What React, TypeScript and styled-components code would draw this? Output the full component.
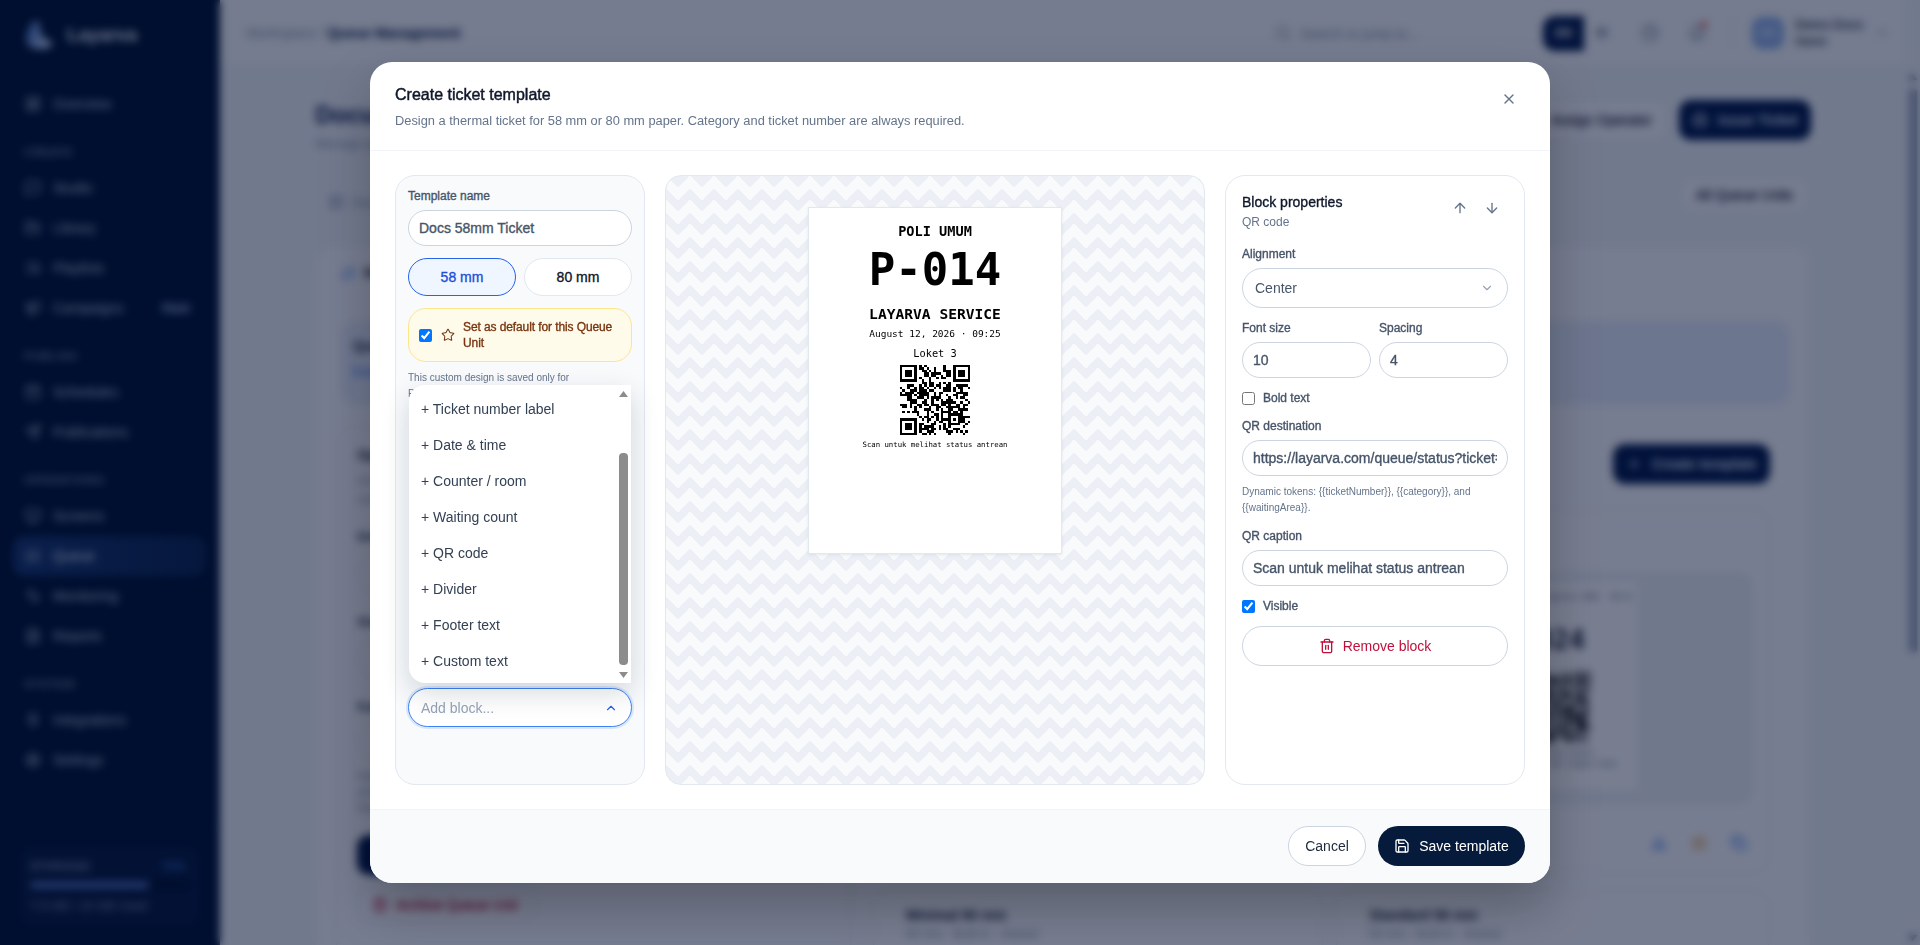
import styled, { createGlobalStyle, css } from "styled-components";
import {
  Activity,
  ArrowDown,
  ArrowUp,
  Bell,
  Calendar,
  ChevronDown,
  ChevronUp,
  Clock,
  Copy,
  Download,
  FileText,
  FolderOpen,
  LayoutDashboard,
  ListOrdered,
  ListVideo,
  Megaphone,
  MessageSquare,
  Monitor,
  Plug,
  Plus,
  Printer,
  Repeat,
  Save,
  Search,
  Send,
  Settings,
  Star,
  Trash2,
  X,
} from "lucide-react";

const GlobalStyle = createGlobalStyle`
  html, body {
    margin: 0;
    height: 945px;
    overflow: hidden;
    font-family: "Liberation Sans", Arial, sans-serif;
    background: #f1f5f9;
  }
  * { box-sizing: border-box; }
`;

// the reference text has regular widths with a heavier stroke
const medium = css`
  -webkit-text-stroke: 0.35px currentColor;
`;

/* ---------- QR drawing ---------- */

const buildQr = (seed: number) => {
  const n = 29;
  const grid: boolean[][] = [];
  let s = seed;
  for (let y = 0; y < n; y++) {
    grid[y] = [];
    for (let x = 0; x < n; x++) {
      s = (s * 1103515245 + 12345) & 0x7fffffff;
      grid[y][x] = ((s >> 16) & 7) > 3;
    }
  }
  const clear = (x0: number, y0: number, w: number) => {
    for (let y = y0; y < y0 + w; y++)
      for (let x = x0; x < x0 + w; x++)
        if (grid[y] && x >= 0 && x < n) grid[y][x] = false;
  };
  const ring = (x0: number, y0: number, w: number) => {
    for (let y = y0; y < y0 + w; y++)
      for (let x = x0; x < x0 + w; x++)
        if (y === y0 || x === x0 || y === y0 + w - 1 || x === x0 + w - 1) grid[y][x] = true;
  };
  const finder = (x0: number, y0: number) => {
    ring(x0, y0, 7);
    for (let y = y0 + 2; y < y0 + 5; y++) for (let x = x0 + 2; x < x0 + 5; x++) grid[y][x] = true;
  };
  clear(0, 0, 8);
  clear(n - 8, 0, 8);
  clear(0, n - 8, 8);
  finder(0, 0);
  finder(n - 7, 0);
  finder(0, n - 7);
  clear(20, 20, 5);
  ring(20, 20, 5);
  grid[22][22] = true;
  let d = "";
  grid.forEach((row, y) =>
    row.forEach((on, x) => {
      if (on) d += `M${x} ${y}h1v1h-1z`;
    }),
  );
  return d;
};

const qrPath = buildQr(20260812);

const QrSvg = styled.svg<{ $size: number; $gap?: number }>`
  display: block;
  width: ${(p) => p.$size}px;
  height: ${(p) => p.$size}px;
  margin-top: ${(p) => p.$gap ?? 0}px;
  flex: none;
`;

const QrCode = ({ size, gap }: { size: number; gap?: number }) => (
  <QrSvg $size={size} $gap={gap} viewBox="0 0 29 29" shapeRendering="crispEdges">
    <path d={qrPath} fill="#000" />
  </QrSvg>
);

/* ---------- dashboard behind the dialog ---------- */

const Shell = styled.div`
  display: grid;
  grid-template-columns: 220px 1fr 15px;
  grid-template-rows: 945px;
  height: 945px;
  overflow: hidden;
  background: #f1f5f9;
`;

const Sidebar = styled.aside`
  display: flex;
  flex-direction: column;
  min-height: 0;
  background: #001332;
  color: #b9c7de;
  border-right: 1px solid #1c3560;
`;

const Brand = styled.div`
  display: flex;
  align-items: center;
  gap: 13px;
  height: 84px;
  padding: 0 0 14px 25px;
  font-size: 18.5px;
  font-weight: 700;
  color: #e6eefa;
`;

const Nav = styled.nav`
  display: flex;
  flex-direction: column;
`;

const SectionLabel = styled.div`
  height: 44px;
  padding: 20px 0 0 24px;
  font-size: 11.5px;
  line-height: 16px;
  letter-spacing: 0.6px;
  color: #a3b2cc;
`;

const NavItem = styled.div<{ $active?: boolean }>`
  display: flex;
  align-items: center;
  gap: 12px;
  height: 40px;
  margin: 0 13px;
  padding: 0 12px;
  border-radius: 12px;
  font-size: 14px;
  background: ${(p) => (p.$active ? "linear-gradient(90deg, #15366e, #0d2650)" : "transparent")};
  color: ${(p) => (p.$active ? "#e6eefa" : "#b9c7de")};
`;

const NavBadge = styled.span`
  margin-left: auto;
  padding: 2px 5px;
  border-radius: 6px;
  font-size: 11px;
  font-weight: 700;
  background: #0c2248;
`;

const SideFooter = styled.div`
  margin-top: auto;
  padding: 17px 18px;
  border-top: 1px solid #0c2146;
`;

const StorageCard = styled.div`
  height: 83px;
  padding: 15px 12px 0;
  border-radius: 14px;
  background: #05193d;
  font-size: 12.5px;
  line-height: 13px;
  color: #8697b6;
`;

const StorageHead = styled.div`
  display: flex;
  justify-content: space-between;
  font-size: 11.5px;
  font-weight: 700;
  letter-spacing: 0.6px;
`;

const StoragePct = styled.span`
  padding: 0 3px;
  color: #3a6fd4;
`;

const Track = styled.div`
  height: 6px;
  margin: 9px 0 12px;
  border-radius: 3px;
  background: #010c24;
  overflow: hidden;
`;

const Fill = styled.div`
  height: 100%;
  border-radius: 3px;
  background: #5878c8;
`;

const Main = styled.main`
  display: flex;
  flex-direction: column;
  min-width: 0;
  min-height: 0;
  overflow: hidden;
`;

const Topbar = styled.header`
  display: flex;
  align-items: center;
  flex: none;
  height: 67px;
  padding: 0 15px 0 26px;
  background: #f8fafc;
  border-bottom: 1px solid #e2e8f0;
`;

const Crumb = styled.div`
  font-size: 14px;
  color: #8b9ab0;
  b {
    color: #0a1f4a;
  }
`;

const SearchBox = styled.div`
  display: flex;
  align-items: center;
  gap: 9px;
  width: 260px;
  height: 36px;
  margin: 0 18px 0 auto;
  padding: 0 10px;
  font-size: 13.5px;
  color: #7d8ca3;
`;

const LangGroup = styled.div`
  display: flex;
  width: 77px;
  height: 35px;
  margin-right: 13px;
  border-radius: 12px;
  overflow: hidden;
  font-size: 12px;
  font-weight: 700;
`;

const LangOption = styled.span<{ $on?: boolean }>`
  display: flex;
  flex: ${(p) => (p.$on ? "0 0 41px" : 1)};
  align-items: center;
  justify-content: center;
  background: ${(p) => (p.$on ? "#02194a" : "transparent")};
  color: ${(p) => (p.$on ? "#fff" : "#64748b")};
`;

const IconSlot = styled.span`
  position: relative;
  display: flex;
  align-items: center;
  justify-content: center;
  width: 34px;
  height: 34px;
  margin-right: 13px;
  color: #64748b;
`;

const RedDot = styled.i`
  position: absolute;
  top: 6px;
  right: 7px;
  width: 6px;
  height: 6px;
  border-radius: 50%;
  background: #ef4444;
`;

const VRule = styled.span`
  width: 1px;
  height: 28px;
  margin: 0 19px 0 5px;
  background: #e2e8f0;
`;

const Avatar = styled.span`
  display: flex;
  align-items: center;
  justify-content: center;
  width: 32px;
  height: 32px;
  margin-right: 11px;
  border-radius: 10px;
  background: #8fb0e6;
  color: #dbeafe;
  font-size: 12px;
  font-weight: 700;
`;

const UserName = styled.div`
  flex: none;
  width: 79px;
  font-size: 13px;
  line-height: 17px;
  color: #2a3648;
  ${medium}
  small {
    display: block;
    font-size: 11px;
  }
`;

const Page = styled.div`
  padding: 33px 94px 0 95px;
`;

const PageHead = styled.div`
  display: flex;
  justify-content: space-between;
  height: 53px;
`;

const PageTitle = styled.h1`
  margin: 0;
  font-size: 24px;
  line-height: 30px;
  color: #0c2350;
`;

const PageSub = styled.p`
  margin: 6px 0 0;
  font-size: 13px;
  color: #8b9ab0;
`;

const HeadActions = styled.div`
  display: flex;
  gap: 12px;
`;

const GhostButton = styled.div<{ $h?: number }>`
  display: flex;
  align-items: center;
  gap: 8px;
  height: ${(p) => p.$h ?? 40}px;
  padding: 0 14px;
  border-radius: 12px;
  border: 1px solid #dfe5ec;
  background: #fbfcfe;
  font-size: 14px;
  color: #1e293b;
  ${medium}
`;

const NavyButton = styled.div<{ $w?: number }>`
  display: flex;
  align-items: center;
  justify-content: center;
  gap: 10px;
  width: ${(p) => p.$w ?? 132}px;
  height: 40px;
  border-radius: 12px;
  background: #02194a;
  font-size: 14px;
  font-weight: 600;
  color: #dbe6f6;
`;

const PageTools = styled.div`
  display: flex;
  justify-content: space-between;
  align-items: flex-end;
  margin: 25px 0 33px;
  padding-right: 3px;
`;

const TabLink = styled.span`
  display: flex;
  align-items: center;
  gap: 8px;
  padding: 0 0 2px 13px;
  font-size: 13px;
  color: #8b9ab0;
`;

const OuterCard = styled.section`
  padding: 12px 20px 0;
  border: 1px solid #e8edf3;
  border-radius: 20px;
  background: #fbfcfe;
`;

const CardTitle = styled.div`
  display: flex;
  align-items: center;
  gap: 8px;
  height: 30px;
  padding-left: 5px;
  font-size: 14px;
  font-weight: 700;
  color: #1e293b;
  svg {
    color: #3b82f6;
  }
`;

const InfoBand = styled.div`
  height: 84px;
  margin: 33px 0 21px 5px;
  padding: 17px 12px;
  border-radius: 16px;
  background: #e6eefb;
  font-size: 14px;
  font-weight: 700;
  color: #1e293b;
  small {
    display: block;
    margin-top: 10px;
    font-size: 13px;
    font-weight: 400;
    color: #2563eb;
  }
`;

const Columns = styled.div`
  display: grid;
  grid-template-columns: 515px 898px;
  column-gap: 22px;
`;

const FormCard = styled.div`
  height: 560px;
  padding: 20px;
  border: 1px solid #e8edf3;
  border-radius: 18px;
`;

const FormTitle = styled.div`
  font-size: 14px;
  font-weight: 700;
  color: #1e293b;
`;

const FormNote = styled.div<{ $gap?: number }>`
  margin-top: ${(p) => p.$gap ?? 4}px;
  font-size: 12px;
  line-height: 16px;
  color: #8b9ab0;
`;

const FormLabel = styled.div<{ $gap: number }>`
  margin-top: ${(p) => p.$gap}px;
  font-size: 12px;
  font-weight: 700;
  color: #334155;
`;

const FormField = styled.div`
  height: 40px;
  margin-top: 9px;
  border: 1px solid #e2e8f0;
  border-radius: 20px;
`;

const FormSave = styled(NavyButton)`
  width: 100%;
  margin-top: 19px;
`;

const ArchiveButton = styled(GhostButton)`
  width: 178px;
  height: 37px;
  margin-top: 11px;
  color: #be123c;
`;

const TemplatesHead = styled.div`
  display: flex;
  justify-content: flex-end;
  height: 83px;
  padding: 18px 1px 0 0;
`;

const TemplateGrid = styled.div`
  display: grid;
  grid-template-columns: 450px 433px;
  gap: 18px 13px;
`;

const TemplateCard = styled.article<{ $h: number }>`
  height: ${(p) => p.$h}px;
  padding: 62px 15px 0;
  border: 1px solid #e8edf3;
  border-radius: 18px;
  background: #fcfdfe;
`;

const MiniPreview = styled.div`
  display: flex;
  height: 233px;
  padding: 10px 116px 15px 0;
  border-radius: 14px;
  background: #eef2f6;
  justify-content: flex-end;
`;

const MiniPaper = styled.div`
  display: flex;
  flex-direction: column;
  align-items: flex-end;
  width: 214px;
  padding: 10px 5px 0 0;
  background: #fff;
  font-family: "DejaVu Sans Mono", monospace;
  font-size: 7px;
  line-height: 11px;
  color: #334155;
`;

const MiniNumber = styled.div`
  margin: 22px 47px 17px 0;
  font-size: 27px;
  line-height: 30px;
  font-weight: 700;
  color: #1e293b;
`;

const MiniQr = styled.div`
  margin-right: 42px;
`;

const MiniCaption = styled.div<{ $gap?: number; $inset: number }>`
  margin: ${(p) => p.$gap ?? 0}px ${(p) => p.$inset}px 0 0;
`;

const CardActions = styled.div`
  display: flex;
  justify-content: flex-end;
  gap: 24px;
  margin-top: 30px;
  padding-right: 6px;
`;

const ActionDot = styled.span<{ $tone: string }>`
  display: flex;
  color: ${(p) => p.$tone};
`;

const TemplateName = styled.div`
  margin-top: -47px;
  padding-left: 17px;
  font-size: 14px;
  font-weight: 700;
  color: #1e293b;
  small {
    display: block;
    margin-top: 4px;
    font-size: 12px;
    font-weight: 400;
    color: #8b9ab0;
  }
`;

const PageScroll = styled.div`
  display: flex;
  flex-direction: column;
  align-items: center;
  min-height: 0;
  padding-top: 74px;
  background: #f1f5f9;
  color: #475569;
`;

const ScrollThumb = styled.div`
  width: 8px;
  height: 565px;
  margin: 4px 0 auto;
  border-radius: 4px;
  background: #94a0b2;
`;

const ScrollArrow = styled.svg`
  display: block;
  width: 9px;
  height: 6px;
  margin-bottom: 4px;
  flex: none;
`;

/* ---------- overlay + dialog ---------- */

const Backdrop = styled.div`
  position: fixed;
  inset: 0;
  display: flex;
  align-items: center;
  justify-content: center;
  background: rgba(0, 12, 45, 0.53);
  backdrop-filter: blur(4px);
`;

const Dialog = styled.div`
  display: flex;
  flex-direction: column;
  width: 1180px;
  height: 821px;
  border-radius: 22px;
  background: #fff;
  overflow: hidden;
  box-shadow: 0 25px 50px rgba(0, 0, 0, 0.25);
`;

const DialogHead = styled.header`
  display: flex;
  justify-content: space-between;
  flex: none;
  height: 89px;
  padding: 21px 25px 0;
  border-bottom: 1px solid #f1f5f9;
`;

const DialogTitle = styled.h2`
  margin: 0;
  font-size: 16px;
  line-height: 24px;
  font-weight: 400;
  color: #0f172a;
  -webkit-text-stroke: 0.45px currentColor;
`;

const DialogSub = styled.p`
  margin: 6px 0 0;
  font-size: 12.85px;
  line-height: 16px;
  color: #64748b;
`;

const CloseButton = styled.span`
  display: flex;
  align-items: center;
  justify-content: center;
  width: 32px;
  height: 32px;
  color: #64748b;
`;

const IconButton = styled.span`
  display: flex;
  align-items: center;
  justify-content: center;
  width: 32px;
  height: 32px;
  color: #64748b;
`;

const DialogBody = styled.div`
  display: grid;
  grid-template-columns: 250px 1fr 300px;
  column-gap: 20px;
  flex: 1;
  min-height: 0;
  padding: 24px 25px;
`;

const SidePanel = styled.div<{ $tint?: boolean }>`
  display: flex;
  flex-direction: column;
  gap: 12px;
  padding: ${(p) => (p.$tint ? "12px" : "16px")};
  border: 1px solid #e2e8f0;
  border-radius: 20px;
  background: ${(p) => (p.$tint ? "#f8fafc" : "#fff")};
`;

const Field = styled.div`
  display: flex;
  flex-direction: column;
  gap: 6px;
  min-width: 0;
`;

const Label = styled.label`
  font-size: 12px;
  line-height: 16px;
  color: #475569;
  ${medium}
`;

const TextInput = styled.input`
  width: 100%;
  height: 36px;
  padding: 0 10px;
  border: 1px solid #cbd5e1;
  border-radius: 18px;
  outline: none;
  background: #fff;
  font-family: inherit;
  font-size: 14px;
  color: #475569;
  ${medium}
`;

const PaperRow = styled.div`
  display: grid;
  grid-template-columns: 1fr 1fr;
  gap: 8px;
`;

const PaperButton = styled.button<{ $active?: boolean }>`
  height: 38px;
  padding: 0;
  border: 1px solid ${(p) => (p.$active ? "#2563eb" : "#e2e8f0")};
  border-radius: 19px;
  background: ${(p) => (p.$active ? "#eff6ff" : "#fff")};
  font-family: inherit;
  font-size: 14px;
  color: ${(p) => (p.$active ? "#1d4ed8" : "#0f172a")};
  ${medium}
`;

const DefaultBox = styled.div`
  display: flex;
  align-items: center;
  gap: 9px;
  height: 54px;
  padding: 0 10px;
  border: 1px solid #fde68a;
  border-radius: 18px;
  background: #fffbeb;
  font-size: 12px;
  line-height: 16px;
  letter-spacing: -0.1px;
  color: #78350f;
  ${medium}
  svg {
    flex: none;
    margin-right: -1px;
  }
`;

const Check = styled.input`
  flex: none;
  width: 13px;
  height: 13px;
  margin: 0;
`;

const HelpText = styled.p<{ $gap?: number }>`
  margin: ${(p) => p.$gap ?? 0}px 0 0;
  font-size: 10px;
  line-height: 16px;
  color: #64748b;
`;

const BlockPicker = styled.div`
  position: relative;
  margin-top: 274px;
`;

const SelectBox = styled.div<{ $open?: boolean }>`
  display: flex;
  align-items: center;
  justify-content: space-between;
  height: ${(p) => (p.$open ? 39 : 40)}px;
  padding: 0 12px;
  border: 1px solid ${(p) => (p.$open ? "#3b82f6" : "#cbd5e1")};
  border-radius: 20px;
  background: #fff;
  font-size: 14px;
  color: ${(p) => (p.$open ? "#94a3b8" : "#475569")};
  box-shadow: ${(p) => (p.$open ? "0 0 0 2px rgba(59, 130, 246, 0.16)" : "none")};
  svg {
    flex: none;
    margin-right: 1px;
    color: ${(p) => (p.$open ? "#2563eb" : "#94a3b8")};
  }
`;

const DropMenu = styled.div`
  position: absolute;
  left: 1px;
  right: 1px;
  bottom: calc(100% + 5px);
  display: flex;
  height: 298px;
  border-radius: 16px 0 0 16px;
  background: #fff;
  box-shadow: 0 10px 28px rgba(15, 23, 42, 0.16);
  overflow: hidden;
`;

const DropList = styled.div`
  flex: 1;
  padding-top: 6px;
`;

const DropItem = styled.div`
  display: flex;
  align-items: center;
  height: 36px;
  padding-left: 12px;
  font-size: 14px;
  color: #334155;
`;

const Rail = styled.div`
  display: flex;
  flex-direction: column;
  flex: none;
  width: 12px;
  padding: 6px 3px 4px 0;
`;

const RailArrow = styled.svg`
  display: block;
  flex: none;
  width: 9px;
  height: 6px;
`;

const RailThumb = styled.div`
  width: 9px;
  height: 212px;
  margin: 56px 0 7px;
  border-radius: 4px;
  background: #8c8c8c;
`;

const Preview = styled.div`
  display: flex;
  justify-content: center;
  align-items: flex-start;
  padding-top: 31px;
  border: 1px solid #e2e8f0;
  border-radius: 16px;
  background-color: #f8fafc;
  background-image: linear-gradient(135deg, #ecf0f6 25%, transparent 25%),
    linear-gradient(225deg, #ecf0f6 25%, transparent 25%),
    linear-gradient(315deg, #ecf0f6 25%, transparent 25%),
    linear-gradient(45deg, #ecf0f6 25%, transparent 25%);
  background-position: -12px 0, -12px 0, 0 0, 0 0;
  background-size: 24px 24px;
`;

const Ticket = styled.div`
  display: flex;
  flex-direction: column;
  align-items: center;
  width: 254px;
  height: 347px;
  padding-top: 15px;
  border: 1px solid #e2e8f0;
  background: #fff;
  box-shadow: 0 1px 3px rgba(15, 23, 42, 0.08);
  font-family: "DejaVu Sans Mono", "Liberation Mono", monospace;
  color: #000;
`;

const TicketLine = styled.div<{ $size: number; $lh: number; $gap?: number; $bold?: boolean }>`
  margin-top: ${(p) => p.$gap ?? 0}px;
  font-size: ${(p) => p.$size}px;
  line-height: ${(p) => p.$lh}px;
  font-weight: ${(p) => (p.$bold ? 700 : 400)};
  white-space: nowrap;
`;

const PropsHead = styled.div`
  display: flex;
  justify-content: space-between;
  margin-bottom: 4px;
`;

const PropsTitle = styled.div`
  font-size: 14px;
  line-height: 20px;
  color: #0f172a;
  ${medium}
`;

const PropsSub = styled.div`
  margin-top: 2px;
  font-size: 12px;
  line-height: 16px;
  color: #64748b;
`;

const MoveButtons = styled.div`
  display: flex;
`;

const TwoCols = styled.div`
  display: grid;
  grid-template-columns: 1fr 1fr;
  gap: 8px;
`;

const CheckRow = styled.label`
  display: flex;
  align-items: center;
  gap: 8px;
  height: 16px;
  font-size: 12px;
  color: #475569;
  ${medium}
`;

const HintText = styled.p`
  margin: 2px 0 0;
  font-size: 10px;
  line-height: 16px;
  color: #64748b;
`;

const RemoveButton = styled.button`
  display: flex;
  align-items: center;
  justify-content: center;
  gap: 8px;
  height: 40px;
  padding: 0;
  border: 1px solid #cbd5e1;
  border-radius: 20px;
  background: #fff;
  font-family: inherit;
  font-size: 14px;
  color: #be123c;
`;

const DialogFoot = styled.footer`
  display: flex;
  justify-content: flex-end;
  align-items: center;
  gap: 12px;
  flex: none;
  height: 74px;
  padding: 0 25px 1px;
  border-top: 1px solid #f1f5f9;
  background: #f8fafc;
`;

const CancelButton = styled.button`
  width: 78px;
  height: 40px;
  padding: 0;
  border: 1px solid #cbd5e1;
  border-radius: 20px;
  background: #fff;
  font-family: inherit;
  font-size: 14px;
  color: #1e293b;
`;

const SaveButton = styled.button`
  display: flex;
  align-items: center;
  justify-content: center;
  gap: 9px;
  width: 147px;
  height: 40px;
  padding: 0;
  border: 0;
  border-radius: 20px;
  background: #061a3c;
  font-family: inherit;
  font-size: 14px;
  color: #fff;
`;

const navSections = [
  { items: [{ label: "Overview", icon: LayoutDashboard }] },
  {
    title: "CREATE",
    items: [
      { label: "Studio", icon: MessageSquare },
      { label: "Library", icon: FolderOpen },
      { label: "Playlists", icon: ListVideo },
      { label: "Campaigns", icon: Megaphone, badge: "Pack" },
    ],
  },
  {
    title: "PUBLISH",
    items: [
      { label: "Schedules", icon: Calendar },
      { label: "Publications", icon: Send },
    ],
  },
  {
    title: "OPERATIONS",
    items: [
      { label: "Screens", icon: Monitor },
      { label: "Queue", icon: ListOrdered, active: true },
      { label: "Monitoring", icon: Activity },
      { label: "Reports", icon: FileText },
    ],
  },
  {
    title: "SYSTEM",
    items: [
      { label: "Integrations", icon: Plug },
      { label: "Settings", icon: Settings },
    ],
  },
];

const blockOptions = [
  "Ticket number label",
  "Date & time",
  "Counter / room",
  "Waiting count",
  "QR code",
  "Divider",
  "Footer text",
  "Custom text",
];

const LayarvaLogo = () => (
  <svg width="29" height="30" viewBox="0 0 29 30">
    <defs>
      <linearGradient id="logoFill" x1="0" y1="0" x2="1" y2="0.4">
        <stop offset="0" stopColor="#2a5bb0" />
        <stop offset="1" stopColor="#c6d8f3" />
      </linearGradient>
    </defs>
    <path d="M9 1c4-1 6 1 6 5 0 8 3 13 12 16 1 2-1 5-5 6-8 2-16 1-20-4C-1 18 3 6 9 1z" fill="url(#logoFill)" />
  </svg>
);

const Dashboard = () => (
  <Shell>
    <Sidebar>
      <Brand>
        <LayarvaLogo />
        Layarva
      </Brand>
      <Nav>
        {navSections.map((section) => (
          <div key={section.title ?? "top"}>
            {section.title && <SectionLabel>{section.title}</SectionLabel>}
            {section.items.map((item) => (
              <NavItem key={item.label} $active={"active" in item}>
                <item.icon size={16} />
                {item.label}
                {"badge" in item && <NavBadge>{item.badge}</NavBadge>}
              </NavItem>
            ))}
          </div>
        ))}
      </Nav>
      <SideFooter>
        <StorageCard>
          <StorageHead>
            STORAGE
            <StoragePct>75%</StoragePct>
          </StorageHead>
          <Track>
            <Fill style={{ width: "75%" }} />
          </Track>
          7.5 GB / 10 GB Used
        </StorageCard>
      </SideFooter>
    </Sidebar>
    <Main>
      <Topbar>
        <Crumb>
          Workspace / <b>Queue Management</b>
        </Crumb>
        <SearchBox>
          <Search size={16} />
          Search or jump to...
        </SearchBox>
        <LangGroup>
          <LangOption $on>EN</LangOption>
          <LangOption>ID</LangOption>
        </LangGroup>
        <IconSlot>
          <Clock size={18} />
        </IconSlot>
        <IconSlot>
          <Bell size={18} />
          <RedDot />
        </IconSlot>
        <VRule />
        <Avatar>DD</Avatar>
        <UserName>
          Demo Docs
          <small>Owner</small>
        </UserName>
        <ChevronDown size={16} color="#94a3b8" />
      </Topbar>
      <Page>
        <PageHead>
          <div>
            <PageTitle>Documentation</PageTitle>
            <PageSub>Manage queues, tickets and counters</PageSub>
          </div>
          <HeadActions>
            <GhostButton>Assign Operator</GhostButton>
            <NavyButton>
              <Printer size={16} />
              Issue Ticket
            </NavyButton>
          </HeadActions>
        </PageHead>
        <PageTools>
          <TabLink>
            <LayoutDashboard size={16} />
            Overview
          </TabLink>
          <GhostButton $h={34}>All Queue Units</GhostButton>
        </PageTools>
        <OuterCard>
          <CardTitle>
            <Repeat size={15} />
            Real-time queue
          </CardTitle>
          <InfoBand>
            Queue Unit
            <small>Every ticket belongs to one unit</small>
          </InfoBand>
          <Columns>
            <FormCard>
              <FormTitle>Options</FormTitle>
              <FormNote $gap={10}>Choose how this unit works</FormNote>
              <FormNote $gap={3}>Unit settings</FormNote>
              <FormLabel $gap={22}>Default</FormLabel>
              <FormField />
              <FormLabel $gap={22}>Status</FormLabel>
              <FormField />
              <FormLabel $gap={22}>Kategori</FormLabel>
              <FormField />
              <FormNote $gap={5}>
                Kategori tiket
                <br />
                antrean
                <br />
                Data
              </FormNote>
              <FormSave>Save</FormSave>
              <ArchiveButton>
                <Trash2 size={16} />
                Archive Queue Unit
              </ArchiveButton>
            </FormCard>
            <div>
              <TemplatesHead>
                <NavyButton $w={157}>
                  <Plus size={16} />
                  Create template
                </NavyButton>
              </TemplatesHead>
              <TemplateGrid>
                <TemplateCard $h={364} />
                <TemplateCard $h={364}>
                  <MiniPreview>
                    <MiniPaper>
                      <div>12 Agustus 2026 · 09:41</div>
                      <MiniNumber>A-024</MiniNumber>
                      <MiniQr>
                        <QrCode size={71} />
                      </MiniQr>
                      <MiniCaption $gap={5} $inset={39}>
                        Pantau status
                      </MiniCaption>
                      <MiniCaption $inset={15}>mohon tunggu dan simpan tiket</MiniCaption>
                    </MiniPaper>
                  </MiniPreview>
                  <CardActions>
                    <ActionDot $tone="#2563eb">
                      <Download size={16} />
                    </ActionDot>
                    <ActionDot $tone="#d97706">
                      <Star size={16} />
                    </ActionDot>
                    <ActionDot $tone="#2563eb">
                      <Copy size={16} />
                    </ActionDot>
                  </CardActions>
                </TemplateCard>
                <TemplateCard $h={120}>
                  <TemplateName>
                    Minimal 80 mm
                    <small>80 mm · Built-in · shared</small>
                  </TemplateName>
                </TemplateCard>
                <TemplateCard $h={120}>
                  <TemplateName>
                    Standard 58 mm
                    <small>58 mm · Built-in · shared</small>
                  </TemplateName>
                </TemplateCard>
              </TemplateGrid>
            </div>
          </Columns>
        </OuterCard>
      </Page>
    </Main>
    <PageScroll>
      <ScrollArrow viewBox="0 0 9 6">
        <path d="M4.5 0 9 6H0z" fill="currentColor" />
      </ScrollArrow>
      <ScrollThumb />
      <ScrollArrow viewBox="0 0 9 6">
        <path d="M0 0h9L4.5 6z" fill="currentColor" />
      </ScrollArrow>
    </PageScroll>
  </Shell>
);

const TemplateDialog = () => (
  <Backdrop>
    <Dialog>
      <DialogHead>
        <div>
          <DialogTitle>Create ticket template</DialogTitle>
          <DialogSub>
            Design a thermal ticket for 58 mm or 80 mm paper. Category and ticket number are always required.
          </DialogSub>
        </div>
        <CloseButton>
          <X size={16} />
        </CloseButton>
      </DialogHead>
      <DialogBody>
        <SidePanel $tint>
          <Field>
            <Label>Template name</Label>
            <TextInput readOnly value="Docs 58mm Ticket" />
          </Field>
          <PaperRow>
            <PaperButton $active>58 mm</PaperButton>
            <PaperButton>80 mm</PaperButton>
          </PaperRow>
          <DefaultBox>
            <Check type="checkbox" readOnly checked />
            <Star size={14} strokeWidth={1.75} />
            <span>Set as default for this Queue Unit</span>
          </DefaultBox>
          <HelpText $gap={-4}>
            This custom design is saved only for
            <br />
            Poli Umum.
          </HelpText>
          <BlockPicker>
            <DropMenu>
              <DropList>
                {blockOptions.map((option) => (
                  <DropItem key={option}>+ {option}</DropItem>
                ))}
              </DropList>
              <Rail>
                <RailArrow viewBox="0 0 9 6">
                  <path d="M4.5 0 9 6H0z" fill="#8c8c8c" />
                </RailArrow>
                <RailThumb />
                <RailArrow viewBox="0 0 9 6">
                  <path d="M0 0h9L4.5 6z" fill="#8c8c8c" />
                </RailArrow>
              </Rail>
            </DropMenu>
            <SelectBox $open>
              Add block...
              <ChevronUp size={14} />
            </SelectBox>
          </BlockPicker>
        </SidePanel>

        <Preview>
          <Ticket>
            <TicketLine $size={13.6} $lh={16} $bold>
              POLI UMUM
            </TicketLine>
            <TicketLine $size={44} $lh={48} $gap={7} $bold>
              P-014
            </TicketLine>
            <TicketLine $size={14.6} $lh={18} $gap={11} $bold>
              LAYARVA SERVICE
            </TicketLine>
            <TicketLine $size={9.5} $lh={12} $gap={5}>
              August 12, 2026 · 09:25
            </TicketLine>
            <TicketLine $size={10.3} $lh={13} $gap={7}>
              Loket 3
            </TicketLine>
            <QrCode size={70} gap={5} />
            <TicketLine $size={7.3} $lh={10} $gap={5}>
              Scan untuk melihat status antrean
            </TicketLine>
          </Ticket>
        </Preview>

        <SidePanel>
          <PropsHead>
            <div>
              <PropsTitle>Block properties</PropsTitle>
              <PropsSub>QR code</PropsSub>
            </div>
            <MoveButtons>
              <IconButton>
                <ArrowUp size={16} />
              </IconButton>
              <IconButton>
                <ArrowDown size={16} />
              </IconButton>
            </MoveButtons>
          </PropsHead>
          <Field>
            <Label>Alignment</Label>
            <SelectBox>
              Center
              <ChevronDown size={14} />
            </SelectBox>
          </Field>
          <TwoCols>
            <Field>
              <Label>Font size</Label>
              <TextInput readOnly value="10" />
            </Field>
            <Field>
              <Label>Spacing</Label>
              <TextInput readOnly value="4" />
            </Field>
          </TwoCols>
          <CheckRow>
            <Check type="checkbox" readOnly />
            Bold text
          </CheckRow>
          <Field>
            <Label>QR destination</Label>
            <TextInput readOnly value="https://layarva.com/queue/status?ticket={{ticketNumber}}" />
            <HintText>
              Dynamic tokens: {"{{ticketNumber}}"}, {"{{category}}"}, and {"{{waitingArea}}"}.
            </HintText>
          </Field>
          <Field>
            <Label>QR caption</Label>
            <TextInput readOnly value="Scan untuk melihat status antrean" />
          </Field>
          <CheckRow>
            <Check type="checkbox" readOnly checked />
            Visible
          </CheckRow>
          <RemoveButton>
            <Trash2 size={16} />
            Remove block
          </RemoveButton>
        </SidePanel>
      </DialogBody>
      <DialogFoot>
        <CancelButton>Cancel</CancelButton>
        <SaveButton>
          <Save size={16} />
          Save template
        </SaveButton>
      </DialogFoot>
    </Dialog>
  </Backdrop>
);

export default function App() {
  return (
    <>
      <GlobalStyle />
      <Dashboard />
      <TemplateDialog />
    </>
  );
}
